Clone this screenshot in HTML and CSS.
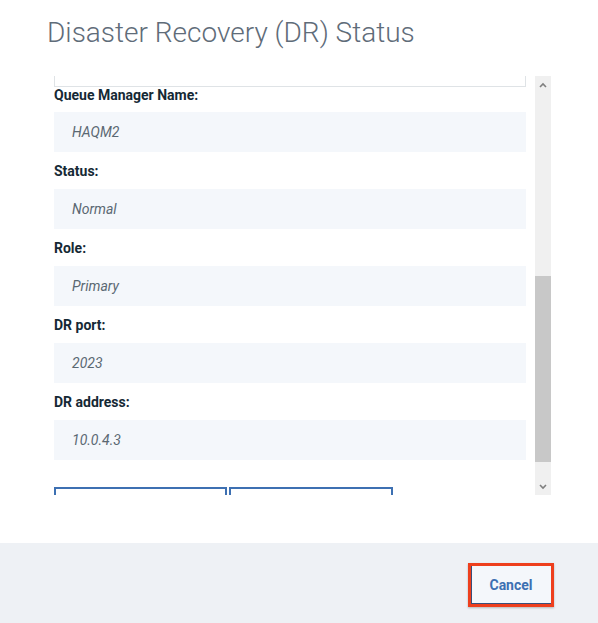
FILE: index.html
```html
<!DOCTYPE html>
<html lang="en">
<head>
<meta charset="utf-8">
<title>Disaster Recovery (DR) Status</title>
<link rel="stylesheet" href="styles.css">
</head>
<body>
<div class="modal">
  <div class="modal-body">
    <h1 class="title">Disaster Recovery (DR) Status</h1>
    <div class="scroll-area">
      <div class="scroll-content">
        <div class="top-box"></div>
        <div class="field first">
          <div class="label">Queue Manager Name:</div>
          <div class="value">HAQM2</div>
        </div>
        <div class="field">
          <div class="label">Status:</div>
          <div class="value">Normal</div>
        </div>
        <div class="field">
          <div class="label">Role:</div>
          <div class="value">Primary</div>
        </div>
        <div class="field">
          <div class="label">DR port:</div>
          <div class="value">2023</div>
        </div>
        <div class="field">
          <div class="label">DR address:</div>
          <div class="value">10.0.4.3</div>
        </div>
        <div class="actions">
          <div class="ghost-btn wide"></div>
          <div class="ghost-btn narrow"></div>
        </div>
      </div>
      <div class="scrollbar">
        <div class="arrow up"><svg width="8" height="6" viewBox="0 0 8 6"><path d="M1 5 L4 2 L7 5" fill="none" stroke="#7f7f7f" stroke-width="1.6"/></svg></div>
        <div class="track">
          <div class="thumb"></div>
        </div>
        <div class="arrow down"><svg width="8" height="6" viewBox="0 0 8 6"><path d="M1 1 L4 4 L7 1" fill="none" stroke="#7f7f7f" stroke-width="1.6"/></svg></div>
      </div>
    </div>
  </div>
  <div class="modal-footer">
    <button class="cancel-btn">Cancel</button>
  </div>
</div>
</body>
</html>
```
FILE: styles.css
```css
* { box-sizing: border-box; }
html, body {
  margin: 0;
  padding: 0;
  background: #ffffff;
}
body {
  width: 598px;
  height: 623px;
  overflow: hidden;
  font-family: Roboto, "Liberation Sans", sans-serif;
}
.modal {
  display: flex;
  flex-direction: column;
  height: 623px;
}
.modal-body {
  flex: 1;
  display: flex;
  flex-direction: column;
  padding-top: 14px;
}
.title {
  margin: 0 0 0 47px;
  font-size: 28px;
  font-weight: 300;
  line-height: 38px;
  color: #5f6c79;
  letter-spacing: 0;
}
.scroll-area {
  margin-top: 24px;
  margin-left: 54px;
  display: flex;
  height: 419px;
}
.scroll-content {
  width: 472px;
  height: 419px;
  overflow: hidden;
}
.top-box {
  height: 11px;
  border: 1px solid #dfe3e6;
  border-top: none;
}
.field {
  display: flex;
  flex-direction: column;
}
.label {
  font-size: 14px;
  font-weight: 700;
  line-height: 16px;
  color: #152935;
  margin-top: 11px;
  margin-bottom: 10px;
  letter-spacing: 0;
}
.field.first .label {
  margin-top: 0;
  margin-bottom: 9px;
}
.value {
  height: 40px;
  background: #f4f7fb;
  padding-left: 18px;
  display: flex;
  align-items: center;
  font-size: 14px;
  font-style: italic;
  color: #5a6872;
}
.actions {
  display: flex;
  gap: 2px;
  margin-top: 27px;
}
.ghost-btn {
  flex: none;
  height: 40px;
  border: 2px solid #3d70b2;
}
.ghost-btn.wide { width: 173px; }
.ghost-btn.narrow { width: 164px; }
.scrollbar {
  margin-left: 9px;
  width: 16px;
  height: 419px;
  background: #f0f0f0;
  display: flex;
  flex-direction: column;
}
.arrow {
  height: 17px;
  display: flex;
  align-items: center;
  justify-content: center;
}
.track {
  flex: 1;
  display: flex;
  flex-direction: column;
  justify-content: flex-end;
  padding-bottom: 16px;
}
.thumb {
  height: 186px;
  background: #c8c8c8;
}
.modal-footer {
  height: 80px;
  background: #eef1f5;
  display: flex;
  justify-content: flex-end;
  align-items: center;
  padding-right: 44px;
  padding-top: 3px;
}
.cancel-btn {
  width: 86px;
  height: 44px;
  background: #f4f7fb;
  border: 3px solid #ee3f1d;
  box-shadow: inset 1px -1px 0 #3a4f7a, 0 1px 2px rgba(0,0,0,0.25);
  color: #3d70b2;
  font-family: Roboto, "Liberation Sans", sans-serif;
  font-size: 14px;
  font-weight: 700;
  padding: 0;
  cursor: pointer;
}
```
